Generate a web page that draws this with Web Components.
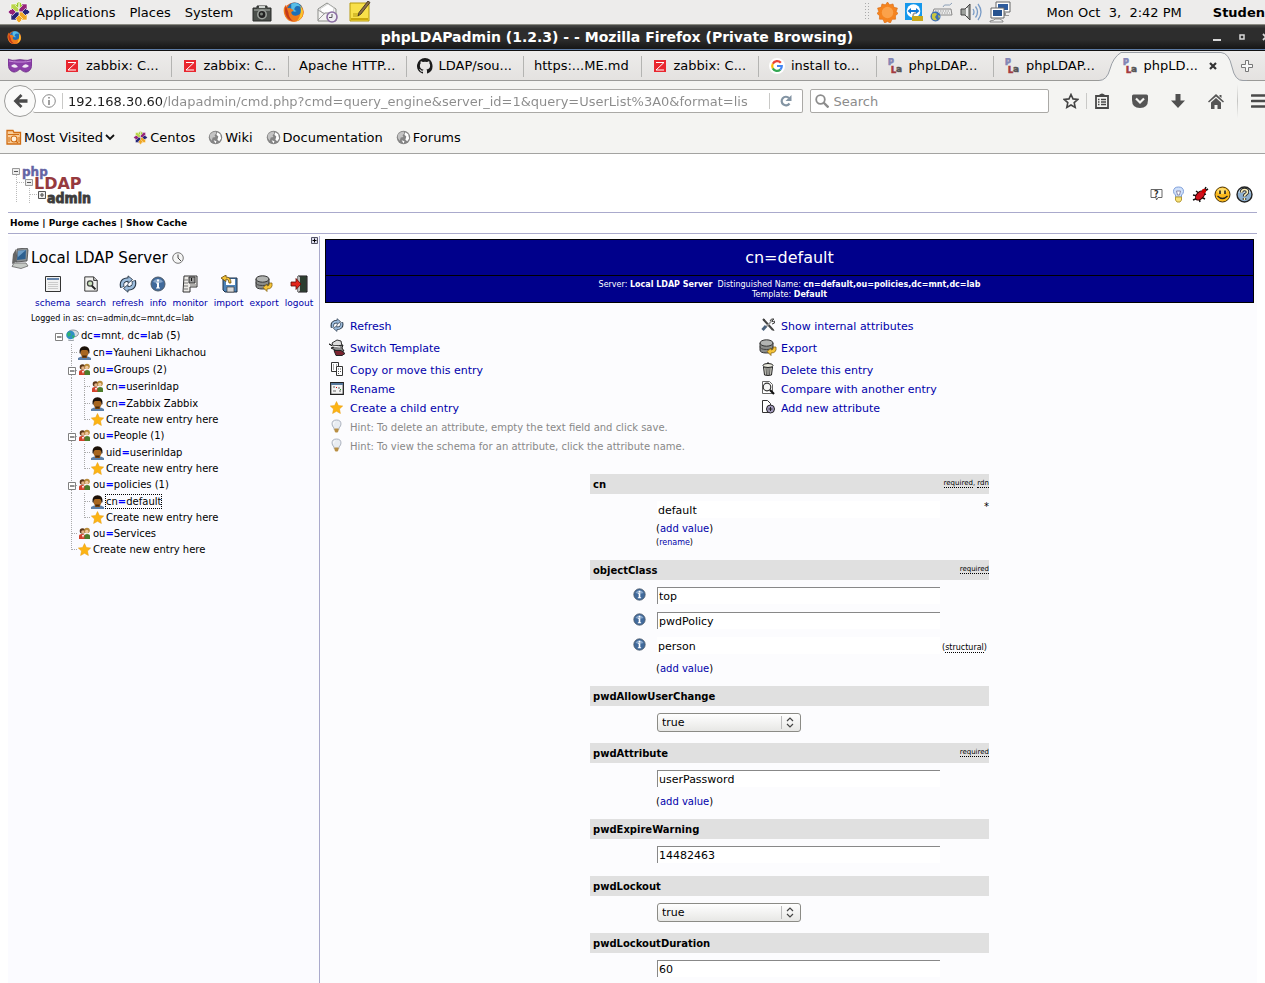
<!DOCTYPE html>
<html lang="en">
<head>
<meta charset="utf-8">
<title>phpLDAPadmin (1.2.3) -</title>
<style>
html,body{margin:0;min-height:100%;overflow-x:hidden}
body{font-family:"DejaVu Sans",sans-serif;font-size:13px;color:#000;background:#fff}
</style>
</head>
<body>
<desktop-screen></desktop-screen>

<script>
const define = (name, html, setup) => {
  const t = document.createElement('template');
  t.innerHTML = html;
  customElements.define(name, class extends HTMLElement {
    connectedCallback() {
      if (this.shadowRoot) return;
      const root = this.attachShadow({mode: 'open'});
      root.append(t.content.cloneNode(true));
      if (setup) setup(root, this);
    }
  });
};

/* Icon artwork: [width, height, svg content] */
const centos = '<g stroke="#fff" stroke-width=".6"><path d="M12 1l3.600 3.600v6.400h-3z" fill="#9ccd2a"/><path d="M12 1L8.400 4.600v6.400h3z" fill="#9ccd2a"/><path d="M12 23l3.600-3.600V13h-7v6.400z" fill="#efa724"/><path d="M1 12l3.600-3.600H11v7H4.600z" fill="#932279"/><path d="M23 12l-3.600-3.600H13v7h6.400z" fill="#262577"/><path d="M4 4h6l-1.500 1.500L12 9v3H9L5.500 8.500 4 10z" fill="#b9d54a"/><path d="M20 4v6l-1.500-1.500L15 12h-3V9l3.500-3.500L14 4z" fill="#932279"/><path d="M20 20h-6l1.500-1.500L12 15v-3h3l3.500 3.500L20 14z" fill="#efa724"/><path d="M4 20v-6l1.500 1.500L9 12h3v3l-3.500 3.500L10 20z" fill="#262577"/></g>';
const firefox = '<circle cx="12" cy="12" r="10.500" fill="#e8641b"/><circle cx="13" cy="10" r="8.500" fill="#1d6fb8"/><path d="M9 3q7-3 11 4-5-3-7 0t2 4q-4 2-6-2z" fill="#58bde6"/><path d="M3 4q0 3 1.500 4Q8 7 9.500 9q2 0 2 1.500L9 12q0 4 5 4 4 0 6.500-4.500Q22 8 20 5q4 6 1.500 11.500T12 22.500 2 16 3 4z" fill="#ee7a1c"/><path d="M19 5q4.500 6 2 11.500-2 4-6 5.500 6-6 4-17z" fill="#fbc62d"/><path d="M3 5q-2 7 1 12 2 4 7 5-5-4-5-9z" fill="#c43a1c"/>';
const globe = '<circle cx="8" cy="8" r="7.200" fill="#858585"/><path d="M2 5q2-3 6-3.500l1 2-2 2 1 2-3 .5-1 3.500-2-3z" fill="#c4c4c4"/><path d="M10 2.500l3 2 1 4.500-2 3-2-1.500 1-3.500-2-2zM6 11l3 1-1 2.500z" fill="#fff"/>';
const people = '<circle cx="4.500" cy="4" r="2.800" fill="#5a3518"/><circle cx="5" cy="5" r="1.800" fill="#e6b489"/><circle cx="9" cy="3.500" r="2.800" fill="#b98b3a"/><circle cx="8.800" cy="4.500" r="1.700" fill="#f0c8a0"/><path d="M1 12V9q0-2 3-2t3 2v3z" fill="#d2402a"/><path d="M6.500 12V8.500q0-1.500 2.500-1.500 3 0 3 2v3z" fill="#4d7d2b"/><path d="M4 8l1 3 1-3z" fill="#fff"/>';
const star = '<path d="M6.500.5l1.900 4 4.300.5-3.200 3 .9 4.500-3.900-2.200L2.600 12.500l.9-4.500L.3 5l4.300-.5z" fill="#fcb414" stroke="#e69a10" stroke-width=".5"/>';
const info = '<circle cx="8" cy="8" r="7" fill="#416a9c" stroke="#4c5a69"/><path d="M3 6a5.500 5 0 0 1 10 0q-5 2-10 0z" fill="#86a5c9"/><path d="M7 3.500h2v2H7zM6 6.500h3v5h1v1H6v-1h1v-4H6z" fill="#fff"/>';
const refresh = '<g fill="none" stroke="#2b3a4a" stroke-width="4"><path d="M3 11Q1 4 9 4M13 5q2 7-6 7"/></g><g fill="#9cbcdc" stroke="#2b3a4a" stroke-width=".8"><path d="M8 .8L12 4 8 7.500zM8 8.500L4 12l4 3.300z"/></g><g fill="none" stroke="#9cbcdc" stroke-width="2.200"><path d="M3 10.500Q1.500 4 9 4M13 5.500q1.500 6.500-6 6.500"/></g>';
const exportArt = '<path d="M1 4v7q0 3 6.500 3t6.500-3V4z" fill="#8a8c8a" stroke="#333"/><ellipse cx="7.500" cy="4" rx="6.500" ry="3.200" fill="#b2b4b2" stroke="#333"/><path d="M1 7.500q0 3 6.500 3t6.500-3" fill="none" stroke="#444"/><path d="M17 8q1 6-5 6v2.500L8 12.500 12 9v2q2.500 0 2.500-3z" fill="#f5c43a" stroke="#7c5a08" stroke-width=".7"/>';
const bulb = '<path d="M6.500 1q4.500 0 4.500 4 0 2-2 4v1.500H4V9Q2 7 2 5q0-4 4.500-4z" fill="#e8ecf2" stroke="#9aa2b0" stroke-width=".8"/><path d="M5 2.500q-1.500 1-1.500 3" stroke="#fff" fill="none"/><path d="M4.500 9.500h4V12l-1 1.500h-2l-1-1.500z" fill="#b98f43"/>';
const ICONS = {
  centos: [24,24,centos], firefox: [24,24,firefox], globe: [16,16,globe], people: [13,13,people], star: [13,13,star],
  info: [16,16,info], refresh: [16,16,refresh], export: [18,17,exportArt], bulb: [13,14,bulb],
  camera: [20,20,'<path d="M1 6h4V4h10v2h4v13H1z" fill="#4b4f4b" stroke="#2a2d2a"/><path d="M2 7h16v2H2z" fill="#7d827d"/><path d="M7 4h6v2H7z" fill="#cfd3cf"/><circle cx="10" cy="12.500" r="5" fill="#9ba09b"/><circle cx="10" cy="12.500" r="3.400" fill="#222"/><circle cx="9.500" cy="12" r="1.500" fill="#7b827b"/>'],
  mail: [22,22,'<path d="M2 8l9-6 9 6v12H2z" fill="#f4f4f2" stroke="#8b8d89"/><path d="M4 8l8-5 6 4-1 5H6z" fill="#fff" stroke="#bbb" stroke-width=".6"/><path d="M2 19l7-7h4l7 7M2 9l7 4" fill="none" stroke="#999"/><circle cx="16" cy="16" r="5" fill="#efedf2" stroke="#8b6ea3" stroke-width="1.600"/><path d="M16 13v3.500h-3" fill="none" stroke="#555"/>'],
  note: [22,22,'<path d="M1 2h19v18H1z" fill="#f8e04a" stroke="#b69a0c"/><path d="M2 17h17v2H2z" fill="#cba90d"/><path d="M4 13h7M4 15h5" stroke="#b69a0c"/><path d="M19 0l2 1.500L12 13l-3 2 1-3.500z" fill="#8b6d4a" stroke="#33281a" stroke-width=".8"/>'],
  grip: [5,18,'<g fill="#aaa"><path d="M0 0h1v1H0zM3 0h1v1H3zM0 3h1v1H0zM3 3h1v1H3zM0 6h1v1H0zM3 6h1v1H3zM0 9h1v1H0zM3 9h1v1H3zM0 12h1v1H0zM3 12h1v1H3zM0 15h1v1H0zM3 15h1v1H3z"/></g>'],
  sun: [22,22,'<path d="M11 0l2.200 3 3.600-1 .9 3.600 3.700.8-1.200 3.600L22 12l-2.700 2.300.2 3.700-3.700.2L14 22l-3-1.500L8 22l-1.800-3.800-3.700-.2.200-3.700L0 12l1.800-2L.6 6.400l3.700-.8L5.200 2l3.600 1z" fill="#f5841f" stroke="#d9660b" stroke-width=".6"/><circle cx="11" cy="11" r="6" fill="#fba24a"/>'],
  viewer: [18,20,'<path d="M0 1h17v17H0z" fill="#1598ec"/><circle cx="8.500" cy="9" r="6.800" fill="#fff"/><path d="M2.500 9l3.500-3v2h5V6l3.500 3-3.500 3v-2H6v2z" fill="#1179d6"/><path d="M7 14h11v5H7z" fill="#c9a91c"/><path d="M8 14q0-3 3-3" fill="none" stroke="#999" stroke-width="1.500"/>'],
  keyboard: [23,20,'<path d="M13 5q1-3 4-2t5-2" fill="none" stroke="#8ca0b8"/><path d="M4 7h17l1 6H2z" fill="#eee" stroke="#888"/><path d="M5 9h15M4 11h16" stroke="#999" stroke-dasharray="1.500 1"/><circle cx="5.500" cy="14.500" r="5" fill="#3d6fb5"/><path d="M2 12q3-2 5 0l-2 3 2 3q-4 1-5-2zM8 13l2 1-1 3z" fill="#c8c640"/>'],
  sound: [22,20,'<path d="M1 7h4l5-5v16l-5-5H1z" fill="#9da09c" stroke="#444"/><path d="M7 6v8" stroke="#eee" stroke-width="2"/><path d="M13 7q2 3 0 6M15.500 4.500q4 5.500 0 11M18 2q6 8 0 16" fill="none" stroke="#7a9cc6" stroke-width="1.300"/>'],
  network: [22,22,'<path d="M7 1h14v10H7z" fill="#fff" stroke="#666"/><path d="M9 3h10v6H9z" fill="#2e5c9e"/><path d="M12 12h5v2h3v1H12z" fill="#999"/><path d="M2 7h13v10H2z" fill="#fff" stroke="#666"/><path d="M4 9h9v6H4z" fill="#26528f"/><path d="M6 18h5l3 2v1H1v-1l4-1z" fill="#eee" stroke="#777" stroke-width=".8"/>'],
  mask: [24,16,'<path d="M0 1q5 2 8 1 4-1 8 0 3 1 8-1 1 9-3 12-4 3-9-2-5 5-9 2Q-1 10 0 1z" fill="#8b3fa8" stroke="#5f2379" stroke-width=".6"/><path d="M1 3q5 1 8 1t6 0 8-1" stroke="#c58bd9" fill="none"/><path d="M3 8q4-4 7 1-4 2-7-1zM21 8q-4-4-7 1 4 2 7-1z" fill="#f1e8f5"/>'],
  zabbix: [12,12,'<path d="M0 0h12v12H0z" fill="#e9262e"/><path d="M2 2.500h8L2 10h8" fill="none" stroke="#fff"/>'],
  github: [16,16,'<path d="M8 0a8 8 0 0 0-2.500 15.600c.4.100.5-.2.500-.4v-1.500c-2.200.5-2.700-1-2.700-1-.4-.9-.9-1.200-.9-1.200-.7-.5.100-.5.100-.5.800.100 1.200.8 1.200.8.700 1.200 1.900.9 2.300.7.100-.5.300-.9.500-1.100-1.800-.2-3.600-.9-3.600-4 0-.9.300-1.600.8-2.100-.1-.2-.4-1 .1-2.100 0 0 .7-.2 2.200.8a7.500 7.500 0 0 1 4 0c1.500-1 2.200-.8 2.200-.8.400 1.100.2 1.900.100 2.100.5.600.8 1.300.8 2.100 0 3.100-1.900 3.700-3.700 3.900.3.300.6.800.6 1.500v2.200c0 .2.100.5.500.4A8 8 0 0 0 8 0z" fill="#1b1b1b"/>'],
  google: [16,16,'<circle cx="8" cy="8" r="8" fill="#fff"/><g fill="none" stroke-width="2.200"><path d="M11.800 4.800A4.800 4.800 0 0 0 3.800 5.800" stroke="#ea4335"/><path d="M3.800 5.800a4.800 4.800 0 0 0 0 4.600" stroke="#fbbc05"/><path d="M3.800 10.400a4.800 4.800 0 0 0 7.500 1.200" stroke="#34a853"/><path d="M11.300 11.600A4.800 4.800 0 0 0 12.800 8H8" stroke="#4285f4"/></g>'],
  pla: [16,16,'<g font-family="DejaVu Sans" font-weight="bold"><text x="1" y="7" font-size="8" fill="#8286b4" stroke="#8286b4" stroke-width=".7">P</text><text x="4" y="15" font-size="8" fill="#a23c40" stroke="#a23c40" stroke-width=".7">L</text><text x="9" y="14" font-size="9" fill="#555" stroke="#555" stroke-width=".5">a</text></g>'],
  close: [8,8,'<path d="M1 1l6 6M7 1L1 7" stroke="#333" stroke-width="2.200"/>'],
  plus: [12,12,'<path d="M4.500.5h3v4h4v3h-4v4h-3v-4h-4v-3h4z" fill="#f8f8f8" stroke="#777"/>'],
  back: [16,16,'<path d="M8.500 1L1.500 8l7 7 2-2L7 9.800h8.500V6.200H7L10.500 3z" fill="#4a4a4a"/>'],
  ident: [14,14,'<circle cx="7" cy="7" r="6.300" fill="none" stroke="#888"/><path d="M6.300 3h1.400v1.500H6.300zM6.300 6h1.400v5H6.300z" fill="#777"/>'],
  reload: [14,14,'<path d="M10.500 9.500a4.300 4.300 0 1 1-.5-5.500" fill="none" stroke="#8394a3" stroke-width="2.200"/><path d="M12.500 1v6h-6z" fill="#8394a3"/>'],
  lens: [14,14,'<circle cx="5.500" cy="5.500" r="4.300" fill="none" stroke="#8c8c8c" stroke-width="1.800"/><path d="M8.500 8.500l5 5" stroke="#8c8c8c" stroke-width="2.400"/>'],
  bookmark: [16,16,'<path d="M8 1.500l2 4.400 4.800.5-3.600 3.200 1 4.800L8 12l-4.200 2.400 1-4.800L1.200 6.400 6 5.900z" fill="none" stroke="#444" stroke-width="1.600"/>'],
  clip: [14,16,'<path d="M1 3h12v12H1z" fill="none" stroke="#484848" stroke-width="1.800"/><path d="M4 4V2q3-3 6 0v2z" fill="#484848"/><path d="M3 6.500h1.500M6 6.500h5M3 9h1.500M6 9h5M3 11.500h1.500M6 11.500h5" stroke="#484848" stroke-width="1.300"/>'],
  pocket: [16,14,'<path d="M0 2q0-1.500 1.500-1.500h13Q16 .5 16 2v4q0 8-8 8T0 6z" fill="#555"/><path d="M4 4.500l4 4 4-4" fill="none" stroke="#f4f4f2" stroke-width="2.200"/>'],
  download: [14,14,'<path d="M4.500 0h5v6.500H14L7 14 0 6.500h4.500z" fill="#505050"/>'],
  home: [16,15,'<path d="M8 0l8 7.500-1 1L8 2.500l-7 6-1-1zM11.500 1h2v3l-2-1.500z" fill="#555"/><path d="M3 8.500l5-4.500 5 4.500V15H9.500v-4h-3v4H3z" fill="#555"/>'],
  menu: [18,14,'<path d="M1 1.500h18M1 7h18M1 12.500h18" stroke="#4a4a4a" stroke-width="2.600" stroke-linecap="round"/>'],
  folder: [16,16,'<path d="M1 1.500h6l1 2h6.500V15H1z" fill="#f9cf9c" stroke="#d16d13" stroke-width="1.300"/><path d="M2 5.500h11M3 8v5M13 8v5" stroke="#d16d13"/><circle cx="8" cy="10" r="3" fill="#fff0dc" stroke="#d16d13" stroke-width="1.200"/><path d="M10 12l2 2" stroke="#d16d13" stroke-width="1.500"/>'],
  chevron: [10,7,'<path d="M1 1l4 4 4-4" fill="none" stroke="#111" stroke-width="1.800"/>'],
  wmin: [10,12,'<path d="M1 8h8v2H1z" fill="#d8d8d8"/>'],
  wmax: [8,12,'<path d="M2 4h4v4H2z" fill="none" stroke="#d8d8d8" stroke-width="1.500"/>'],
  wclose: [8,12,'<path d="M1 3l6 6M7 3L1 9" stroke="#d8d8d8" stroke-width="1.800"/>'],
  logo: [84,42,'<g stroke="#bbb" stroke-dasharray="1 1" fill="none"><path d="M5.500 11v28M18.500 24v15M6 18.500h8M19 30.500h10"/></g><g fill="#eee" stroke="#999"><path d="M1.500 4.500h7v6h-7zM14.500 15.500h7v6h-7z"/><path d="M27.500 27.500h7v7h-7z" stroke="#555"/></g><path d="M3 7.500h4M16 18.500h4M29 31h4M31 29v4" stroke="#555" stroke-width="1.200"/><g font-family="DejaVu Sans" font-weight="bold"><text x="11" y="12" font-size="12" fill="#6464a4" stroke="#6464a4" stroke-width=".4">php</text><text x="23" y="25" font-size="16" fill="#963a3e">LDAP</text><text x="36" y="39" font-size="14" fill="#3c3c3c" stroke="#3c3c3c" stroke-width=".8" font-family="DejaVu Sans Condensed, DejaVu Sans" font-stretch="condensed">admin</text></g>'],
  ask: [13,13,'<path d="M1 1.500h11v8H8L6.500 12 6 9.500H1z" fill="#fff" stroke="#666"/><text x="4" y="8.500" font-size="8" font-weight="bold" font-family="DejaVu Sans" fill="#333">?</text>'],
  idea: [13,17,'<path d="M6.500 1q5 0 5 4.500 0 2-2 3.500v2h-6V9q-2-1.500-2-3.500Q1.500 1 6.500 1z" fill="#cfe0fa" stroke="#7f9fda"/><path d="M4.500 5h4l-1 4h-2z" fill="#fff" stroke="#88a"/><path d="M3.500 11h6v3l-1.500 2H5l-1.500-2z" fill="#f7e27a" stroke="#b79b35"/>'],
  bug: [17,17,'<path d="M14 1l-2 4M16 3l-5 3M1 9l5 1M1 14l5-2M4 5l4 3M14 8l-4 1M13 13l-4-2M8 16l-1-4" stroke="#111" stroke-width="1.500"/><ellipse cx="8" cy="9.500" rx="5.500" ry="3.400" transform="rotate(-45 8 9.500)" fill="#d1101c" stroke="#300"/><circle cx="12" cy="5" r="2.200" fill="#c00"/>'],
  smile: [17,17,'<circle cx="8.500" cy="8.500" r="7.500" fill="#fbb91c" stroke="#4a3305"/><ellipse cx="8" cy="5" rx="5" ry="3" fill="#fddb6a"/><path d="M6 4.500v3.500M11 4.500v3.500" stroke="#222" stroke-width="1.600"/><path d="M3.500 10q5 5 10 0" fill="none" stroke="#222" stroke-width="1.300"/>'],
  help: [17,17,'<circle cx="8.500" cy="8.500" r="7.500" fill="#8fb0cf" stroke="#222" stroke-width="1.400"/><path d="M2.500 7a6 5 0 0 1 12 0z" fill="#c6d9ea"/><path d="M5.500 6.500q0-3 3-3t3 2.500q0 1.500-2 2.500-1 .7-1 2M8.500 12v2" fill="none" stroke="#222" stroke-width="3.400"/><path d="M5.500 6.500q0-3 3-3t3 2.500q0 1.500-2 2.500-1 .7-1 2M8.500 12v2" fill="none" stroke="#fff3bd" stroke-width="1.600"/>'],
  max: [7,7,'<path d="M.5.5h6v6h-6z" fill="#dde" stroke="#556"/><path d="M1.500 3.500h4M3.500 1.500v4" stroke="#000"/>'],
  server: [18,21,'<path d="M6 1l10-1 1 2-1 11-11 1z" fill="#8b9094" stroke="#444" stroke-width=".8"/><path d="M7 3l8-1-.5 9-8.500 1z" fill="#2c5f90"/><path d="M7 3l8-1-8 7z" fill="#6c9cc6"/><path d="M3 15h12l2 3-7 2.500-9-2z" fill="#c6cac6" stroke="#666" stroke-width=".8"/><path d="M2 6l3-5v13l-4 2z" fill="#666"/>'],
  clock: [12,12,'<circle cx="6" cy="6" r="5.300" fill="#f5f5f5" stroke="#777"/><path d="M6 2.500V6l3 3" fill="none" stroke="#444"/>'],
  schema: [18,18,'<path d="M1.500 1.500h15v15h-15z" fill="#f2f2f2" stroke="#333"/><path d="M3 3h12v2H3z" fill="#6484ac"/><path d="M4 7.500h10M4 9.500h10M4 11.500h10M4 13.500h10" stroke="#ccc"/>'],
  search: [18,18,'<path d="M2 1h10l4 4v12H2z" fill="#f2f2f0" stroke="#222"/><path d="M12 1v4h4" fill="#ccc" stroke="#222"/><circle cx="8" cy="8.500" r="3" fill="#cbe3bd" stroke="#444" stroke-width="1.400"/><path d="M10 11l4 4" stroke="#222" stroke-width="2.200"/>'],
  monitor: [18,18,'<path d="M3 1h13v11H9v5H2z" fill="#eceae6" stroke="#333"/><path d="M8 2h6v6H8z" fill="#999" stroke="#333"/><path d="M10 3h1v3h-1z" fill="#111"/><path d="M3 5h4M3 8h4M3 11h4M3 14h4M9 10h6" stroke="#777"/>'],
  import: [18,18,'<path d="M3 3h14v14H5l-2-2z" fill="#4d83b8" stroke="#1c2f44"/><path d="M6 4h9v6H6z" fill="#fff"/><path d="M7 12h7v5H7z" fill="#d8d8d8" stroke="#444" stroke-width=".7"/><path d="M9 8q0-4-3-4V6.500L1 3l5-3v2q5 0 5 6z" fill="#f5c43a" stroke="#6a4a05" stroke-width=".8"/>'],
  logout: [18,18,'<path d="M8 1h9v16H8z" fill="#555" stroke="#111"/><path d="M10 2l6-1v16l-6-1z" fill="#2c3e30"/><path d="M8 1l2 1v14l-2 1z" fill="#bbb"/><path d="M1 7h5V3.500L11 9l-5 5.500V11H1z" fill="#e3241b" stroke="#5c0804" stroke-width=".8"/>'],
  world: [14,13,'<ellipse cx="8" cy="4.500" rx="5.500" ry="3.500" fill="#d8dde2" stroke="#8a949c"/><circle cx="5.500" cy="6" r="4.300" fill="#2f8fc4"/><path d="M2 4l3-1 1 3-3 2zM7 6l3 1-2 3z" fill="#2fb36a"/><path d="M3 11q4 1 6 0" stroke="#a8b0b8"/>'],
  person: [13,14,'<path d="M0 14v-2q3-2 6.500-2t6.500 2v2z" fill="#5c7fa8"/><path d="M4 10h5v2H4z" fill="#8b5217"/><ellipse cx="6.500" cy="6.500" rx="4" ry="5" fill="#a8661f"/><path d="M1.500 7Q1 .3 6.500.3T11.500 7l-1 1q0-4-2-4h-4q-2 0-2 4z" fill="#1b1008"/><path d="M4 9.500h5l-1 2H5z" fill="#4a2a0c"/>'],
  hat: [18,17,'<path d="M4 4l5-3 4 1 1 5-8 2z" fill="#ddd" stroke="#333"/><path d="M1 5q5 3 14 1l-1 3 2 3q-6 2-9-1L3 9l3-1z" fill="#888" stroke="#222"/><path d="M6 11.500h7l4 3-3 2H8z" fill="#7a2430" stroke="#222"/><path d="M4 7l8 1" stroke="#fff"/>'],
  copy: [14,14,'<path d="M1.500.5h7v9h-7z" fill="#fff" stroke="#333"/><path d="M3 3h1M6 3h1M3 5h1M3 7h1" stroke="#555"/><path d="M6.500 4.500h6v9h-6z" fill="#fff" stroke="#333"/><path d="M8 7h1M10 7h1M8 9.500h1M10 9.500h1M8 11.500h1" stroke="#555"/>'],
  rename: [14,13,'<path d="M.7.7h12.600v11.600H.7z" fill="#f4f4f4" stroke="#222" stroke-width="1.300"/><path d="M1 1h12v2H1z" fill="#56789c"/><path d="M3 5h2M8 6h2M3 9h3M9 9h2" stroke="#666" stroke-width="1.200"/><path d="M6 5h1v1H6z" fill="#c00"/><path d="M10 7h1v1h-1z" fill="#2a2"/>'],
  tools: [14,14,'<path d="M2 1l10 11M2 2l2 0" stroke="#444" stroke-width="2"/><path d="M12 1.500L5 9" stroke="#999" stroke-width="1.600"/><path d="M5 8l-3.500 4" stroke="#49617c" stroke-width="3"/><path d="M9 3q1-3 4-2l-2 2 1 1 2-1q0 3-3 3M12 11l1 2" fill="none" stroke="#444"/>'],
  trash: [12,14,'<path d="M1.500 5h9l-1 8q-3.500 1-7 0z" fill="#cfcfc4" stroke="#222"/><path d="M4 6l.5 7M6 6v7M8 6l-.5 7" stroke="#555"/><ellipse cx="6" cy="3.500" rx="5" ry="2" fill="#e8e8dc" stroke="#222"/><path d="M5 1h2" stroke="#222"/>'],
  compare: [14,14,'<path d="M1.500.5h7l3 3v9h-10z" fill="#fff" stroke="#666"/><circle cx="6" cy="6" r="3.800" fill="#f5f5f5" stroke="#333" stroke-width="1.200"/><path d="M9 9l4 4" stroke="#111" stroke-width="2.200"/>'],
  add: [14,14,'<path d="M1.500.5h5l3 3v9h-8z" fill="#fff" stroke="#333"/><circle cx="9.500" cy="9" r="4" fill="#a59cc0" stroke="#222"/><path d="M7.500 9h4M9.500 7v4" stroke="#222"/>'],
  updown: [8,11,'<path d="M1 4l3-3 3 3M1 7l3 3 3-3" fill="none" stroke="#444" stroke-width="1.200"/>'],
  /* tree guides */
  none: [13,17,''],
  bar: [13,17,'<path d="M6.500 0v17" stroke="#aaa" stroke-dasharray="1 1"/>'],
  tee: [13,17,'<path d="M6.500 0v17M7 8.500h6" stroke="#aaa" stroke-dasharray="1 1"/>'],
  end: [13,17,'<path d="M6.500 0v9M7 8.500h6" stroke="#aaa" stroke-dasharray="1 1" fill="none"/>'],
  open: [13,17,'<path d="M6.500 0v17M7 9.500h6" stroke="#aaa" stroke-dasharray="1 1"/><path d="M3.500 6.500h7v7h-7z" fill="#fff" stroke="#808080"/><path d="M5 10h4.500" stroke="#222"/>'],
  root: [13,17,'<path d="M3.500 6.500h7v7h-7z" fill="#fff" stroke="#808080"/><path d="M5 10h4.500" stroke="#222"/>']
};
customElements.define('x-icon', class extends HTMLElement {
  connectedCallback() {
    if (this.shadowRoot) return;
    const [w, h, art] = ICONS[this.getAttribute('name')];
    const W = +this.getAttribute('w') || w, H = Math.round(h * W / w);
    this.attachShadow({mode: 'open'}).innerHTML =
      `<style>:host{display:inline-block;flex:none;width:${W}px;height:${H}px;white-space:normal}svg{display:block}</style><svg width="${W}" height="${H}" viewBox="0 0 ${w} ${h}" aria-hidden="true">${art}</svg>`;
  }
});

const BTN = 'button{all:unset;display:flex;align-items:center;cursor:default}';

define('gnome-panel', `<style>
:host{display:flex;align-items:center;height:24px;background:#edeceb;border-bottom:1px solid #8a8a82;padding-left:7px;white-space:nowrap;overflow:hidden}
${BTN}
.apps{gap:5px}.menus{display:flex;gap:14px;flex:none}.launch{display:flex;gap:11px;margin-left:19px;align-items:center}
.tray{display:flex;align-items:center;gap:7px;margin-left:auto}
time{margin-left:35px;white-space:pre}b{margin-left:31px;flex:none}
</style>
<nav class="menus"><button class="apps"><x-icon name="centos"></x-icon>Applications</button><button>Places</button><button>System</button></nav>
<div class="launch"><x-icon name="camera"></x-icon><x-icon name="firefox" w="22"></x-icon><x-icon name="mail"></x-icon><x-icon name="note"></x-icon></div>
<div class="tray"><x-icon name="grip"></x-icon><x-icon name="sun" w="21"></x-icon><x-icon name="viewer"></x-icon><x-icon name="keyboard"></x-icon><x-icon name="sound"></x-icon><x-icon name="network"></x-icon></div>
<time>Mon Oct  3,  2:42 PM</time><b>Studen</b>`);

define('window-title', `<style>
:host{display:flex;align-items:center;height:24px;background:linear-gradient(#4a4a48,#2d2d2d 15%,#2d2d2d 60%,#161616);border-bottom:1px solid #5c7ba5;box-shadow:0 1px #111;margin-bottom:1px;color:#fff;overflow:hidden}
x-icon[name=firefox]{margin-left:7px}
h1{flex:1;margin:0;font-size:14px;font-weight:bold;text-align:center;white-space:nowrap}
.win{display:flex;gap:16px;margin-right:-5px}${BTN}
</style>
<x-icon name="firefox" w="15"></x-icon><h1>phpLDAPadmin (1.2.3) - - Mozilla Firefox (Private Browsing)</h1>
<div class="win"><button aria-label="Minimize"><x-icon name="wmin"></x-icon></button><button aria-label="Maximize"><x-icon name="wmax"></x-icon></button><button aria-label="Close"><x-icon name="wclose"></x-icon></button></div>`);

define('browser-tab', `<style>
:host{flex:117 1 0;min-width:0;display:flex;align-items:center;position:relative}
button{all:unset;display:flex;align-items:center;gap:6px;padding-left:12px;white-space:nowrap;flex:1;min-width:0}
:host([plain]) button{padding-left:10px}
:host(:not([last]):not([active]))::after{content:"";position:absolute;right:0;top:5px;height:21px;width:1px;background:#b4b4b2}
.edge{display:none}
:host([active]) .edge{display:block;position:absolute;left:-13px;top:0;width:148px;height:30px}
:host([active]) button{position:relative}
.x{display:none}:host([active]) .x{display:flex;flex:none;padding:0;position:relative;margin-right:12px}
</style><svg class="edge" viewBox="0 0 148 30" preserveAspectRatio="none"><path d="M0 29.500Q8 29.500 11 18T22 1.500H122Q130 2 133 16t11 13.500H148V30H0z" fill="#f4f4f2"/><path d="M0 29.500Q8 29.500 11 18T22 1.500H122Q130 2 133 16t11 13.500H148" fill="none" stroke="#9a9fa6"/></svg>
<button role="tab"><slot name="icon"></slot><span><slot></slot></span></button><button class="x" aria-label="Close tab"><x-icon name="close"></x-icon></button>`);

define('tab-strip', `<style>
:host{display:flex;align-items:stretch;height:29px;background:linear-gradient(#edeceb,#e4e2e0);border-bottom:1px solid #9a9a98}
.mask{width:54px;box-sizing:border-box;padding-left:8px;display:flex;align-items:center;flex:none}
${BTN}.new{width:36px;flex:none;position:relative;padding-left:12px;box-sizing:border-box}
x-icon[name=zabbix]{padding-right:2px}
</style><span class="mask"><x-icon name="mask"></x-icon></span>
<browser-tab><x-icon slot="icon" name="zabbix"></x-icon>zabbix: C...</browser-tab>
<browser-tab><x-icon slot="icon" name="zabbix"></x-icon>zabbix: C...</browser-tab>
<browser-tab plain>Apache HTTP...</browser-tab>
<browser-tab plain><x-icon slot="icon" name="github"></x-icon>LDAP/sou...</browser-tab>
<browser-tab plain>https:...ME.md</browser-tab>
<browser-tab><x-icon slot="icon" name="zabbix"></x-icon>zabbix: C...</browser-tab>
<browser-tab plain><x-icon slot="icon" name="google"></x-icon>install to...</browser-tab>
<browser-tab plain><x-icon slot="icon" name="pla"></x-icon>phpLDAP...</browser-tab>
<browser-tab last plain><x-icon slot="icon" name="pla"></x-icon>phpLDAP...</browser-tab>
<browser-tab active plain><x-icon slot="icon" name="pla"></x-icon>phpLD...</browser-tab>
<button class="new" aria-label="New tab"><x-icon name="plus"></x-icon></button>`);

define('nav-bar', `<style>
:host{display:flex;align-items:center;height:40px;background:#f4f4f2;padding-left:4px;overflow:hidden}
${BTN}
.back{width:30px;height:30px;border:1px solid #9c9c9a;border-radius:50%;background:#fafaf9;justify-content:center;flex:none;position:relative}
.url{flex:758;display:flex;align-items:center;height:22px;border:1px solid #aaa9a6;border-left:0;background:#fff;border-radius:2px;margin-left:-3px;padding-left:9px;min-width:0}
input{border:0;outline:0;padding:0;margin:0;font:13px "DejaVu Sans",sans-serif;background:none;flex:1;min-width:0;height:20px}
.sep{width:1px;height:16px;background:#c9c9c7;flex:none}
.url .sep:first-of-type{margin:0 5px 0 6px}
#addr{color:transparent;background:linear-gradient(90deg,#1c1c1c 95px,#8b8b8b 95px);-webkit-background-clip:text;background-clip:text;margin-right:18px}
.reload{padding:0 9px}
.search{flex:233;display:flex;align-items:center;gap:5px;height:22px;border:1px solid #aaa9a6;background:#fff;border-radius:2px;margin-left:7px;padding-left:4px;min-width:0}
#q::placeholder{color:#8b8b8b;opacity:1}
.tools{display:flex;align-items:center;flex:none;margin-left:14px}
.tools .sep{margin:0 8px 0 7px}.tools button+button{margin-left:23px}
.tools .tall{height:34px;margin:0 13px 0 13px;background:linear-gradient(#f4f4f2,#c4c4c2,#f4f4f2)}
.menu{width:14px}
</style>
<button class="back" aria-label="Back"><x-icon name="back"></x-icon></button>
<div class="url"><x-icon name="ident"></x-icon><span class="sep"></span><input id="addr" aria-label="Address" value="192.168.30.60/ldapadmin/cmd.php?cmd=query_engine&amp;server_id=1&amp;query=UserList%3A0&amp;format=lis"><span class="sep"></span><button class="reload" aria-label="Reload"><x-icon name="reload"></x-icon></button></div>
<div class="search"><x-icon name="lens"></x-icon><input id="q" aria-label="Search" placeholder="Search"></div>
<div class="tools"><button aria-label="Bookmark"><x-icon name="bookmark"></x-icon></button><span class="sep"></span><button aria-label="Bookmarks list"><x-icon name="clip"></x-icon></button><button aria-label="Pocket"><x-icon name="pocket"></x-icon></button><button aria-label="Downloads"><x-icon name="download"></x-icon></button><button aria-label="Home"><x-icon name="home"></x-icon></button><span class="sep tall"></span><button class="menu" aria-label="Menu"><x-icon name="menu"></x-icon></button></div>`);

define('bookmarks-bar', `<style>
:host{display:flex;align-items:center;gap:13px;height:32px;background:#f4f4f2;border-bottom:1px solid #a3a3a1;padding-left:6px}
a,button{all:unset;display:flex;align-items:center;gap:2px}button{margin-right:5px}
</style>
<button><x-icon name="folder"></x-icon>Most Visited<x-icon name="chevron"></x-icon></button>
<a href="#centos"><x-icon name="centos" w="15"></x-icon>Centos</a><a href="#wiki"><x-icon name="globe" w="15"></x-icon>Wiki</a><a href="#docs"><x-icon name="globe" w="15"></x-icon>Documentation</a><a href="#forums"><x-icon name="globe" w="15"></x-icon>Forums</a>`);

define('pla-header', `<style>
:host{display:block}
.top{display:flex;justify-content:space-between;align-items:flex-end;height:50px;padding:0 4px 0 3px;border-bottom:1px solid #aaaacc}
.top x-icon[name=logo]{align-self:flex-start;margin-top:2px}
.icons{display:flex;gap:5px;align-items:center;padding-bottom:9px}.icons a{display:flex;justify-content:center;width:17px}
nav{font-size:9px;font-weight:bold;height:20px;line-height:20px;border-bottom:1px solid #aaaacc;padding-left:2px}
nav a{color:#000;text-decoration:none}
</style>
<div class="top"><x-icon name="logo"></x-icon><div class="icons"><a href="#forum" aria-label="Forum"><x-icon name="ask"></x-icon></a><a href="#feature" aria-label="Request feature"><x-icon name="idea"></x-icon></a><a href="#bug" aria-label="Report a bug"><x-icon name="bug"></x-icon></a><a href="#donate" aria-label="Donate"><x-icon name="smile"></x-icon></a><a href="#help" aria-label="Help"><x-icon name="help"></x-icon></a></div></div>
<nav><a href="#home">Home</a> | <a href="#purge">Purge caches</a> | <a href="#cache">Show Cache</a></nav>`);

define('tool-link', `<style>
:host{display:block}a{display:flex;flex-direction:column;align-items:center;gap:4px;color:#0000aa;text-decoration:none;font-size:9px;line-height:12px}
.i{height:19px;display:flex;align-items:center}
</style><a href="#tool"><span class="i"></span><slot></slot></a>`, (root, el) => {
  const i = document.createElement('x-icon');
  i.setAttribute('name', el.getAttribute('icon'));
  i.setAttribute('w', el.getAttribute('w') || 18);
  root.querySelector('.i').append(i);
});

/* One line of the directory tree; "guides" lists the cells left of the icon. */
define('tree-row', `<style>
:host{display:flex;align-items:center;height:17px;font-size:10px;white-space:pre;overflow:hidden}
:host([icon=star]){height:15px}
a{color:#000;text-decoration:none;margin-left:2px;line-height:13px}
:host([selected]) a{outline:1px dotted #000}
.g{display:flex;align-items:center}
i{font-style:normal;font-weight:bold;color:#0000ff}em{font-style:normal;color:#ff0000}
</style><span class="g"></span><a href="#entry"></a>`, (root, el) => {
  const g = root.querySelector('.g');
  for (const n of (el.getAttribute('guides') + ' ' + el.getAttribute('icon')).split(' ')) {
    const i = document.createElement('x-icon');
    i.setAttribute('name', n);
    g.append(i);
  }
  root.querySelector('a').innerHTML = el.getAttribute('text').replace(/,/g, '<em>,</em>').replace(/=/g, '<i>=</i>');
});

define('server-tree', `<style>
:host{display:block;box-sizing:border-box;background:#fbfbff;border-right:1px solid #aaaacc}
.max{display:flex;justify-content:flex-end;align-items:flex-end;height:8px;padding-right:1px}
h2{display:flex;align-items:center;gap:4px;margin:4px 0 0 3px;font-size:15px;font-weight:normal;height:20px}
h2 span{margin-left:-2px}
.tools{display:flex;gap:6px;padding:6px 0 0 27px}
p{margin:3px 0 2px 23px;font-size:8px;line-height:13px}
.tree{padding-left:44px}
</style>
<div class="max"><x-icon name="max"></x-icon></div>
<h2><x-icon name="server"></x-icon><span>Local LDAP Server</span><x-icon name="clock"></x-icon></h2>
<div class="tools"><tool-link icon="schema">schema</tool-link><tool-link icon="search" w="16">search</tool-link><tool-link icon="refresh">refresh</tool-link><tool-link icon="info" w="16">info</tool-link><tool-link icon="monitor">monitor</tool-link><tool-link icon="import">import</tool-link><tool-link icon="export">export</tool-link><tool-link icon="logout">logout</tool-link></div>
<p>Logged in as: cn=admin,dc=mnt,dc=lab</p>
<div class="tree">
<tree-row guides="root" icon="world" text="dc=mnt, dc=lab (5)"></tree-row>
<tree-row guides="none tee" icon="person" text="cn=Yauheni Likhachou"></tree-row>
<tree-row guides="none open" icon="people" text="ou=Groups (2)"></tree-row>
<tree-row guides="none bar tee" icon="people" text="cn=userinldap"></tree-row>
<tree-row guides="none bar tee" icon="person" text="cn=Zabbix Zabbix"></tree-row>
<tree-row guides="none bar end" icon="star" text="Create new entry here"></tree-row>
<tree-row guides="none open" icon="people" text="ou=People (1)"></tree-row>
<tree-row guides="none bar tee" icon="person" text="uid=userinldap"></tree-row>
<tree-row guides="none bar end" icon="star" text="Create new entry here"></tree-row>
<tree-row guides="none open" icon="people" text="ou=policies (1)"></tree-row>
<tree-row guides="none bar tee" icon="person" selected text="cn=default"></tree-row>
<tree-row guides="none bar end" icon="star" text="Create new entry here"></tree-row>
<tree-row guides="none tee" icon="people" text="ou=Services"></tree-row>
<tree-row guides="none end" icon="star" text="Create new entry here"></tree-row>
</div>`);

define('entry-action', `<style>
:host{display:flex;align-items:center;height:19px;font-size:11px}
:host([big]){height:25px}:host([first]){height:20px}
.i{box-sizing:border-box;width:25px;display:flex;justify-content:center;flex:none;padding:0 2px 3px 0}
a{color:#0000aa;text-decoration:none}
:host([hint]){font-size:10px;color:#888}
</style><span class="i"></span>`, (root, el) => {
  const i = document.createElement('x-icon');
  i.setAttribute('name', el.getAttribute('icon'));
  if (el.hasAttribute('w')) i.setAttribute('w', el.getAttribute('w'));
  root.querySelector('.i').append(i);
  const t = document.createElement(el.hasAttribute('hint') ? 'span' : 'a');
  if (t.localName === 'a') t.href = '#action';
  t.append(document.createElement('slot'));
  root.append(t);
});

define('attr-block', `<style>
:host{display:block}
.head{display:flex;justify-content:space-between;align-items:center;height:20px;background:#e0e0e0;padding-left:3px}
h3{margin:0;font-size:10px}h3 a{color:#000;text-decoration:none}
small{font-size:7px;line-height:8px;padding-bottom:2px}
abbr{text-decoration:none;border-bottom:1px dotted #000}
.body{display:flex;flex-direction:column;gap:6px;padding:7px 0 11px}
:host([tight]) .body{gap:2px}
</style><div class="head"><h3><a href="#schema"></a></h3><small></small></div><div class="body"><slot></slot></div>`, (root, el) => {
  root.querySelector('h3 a').textContent = el.getAttribute('name');
  root.querySelector('small').innerHTML = (el.getAttribute('note') || '').split(', ').filter(Boolean).map(n => `<abbr>${n}</abbr>`).join(', ');
});

define('attr-field', `<style>
:host{display:grid;grid-template-columns:67px 283px 1fr;align-items:start;height:19px}
.i{display:flex;justify-content:flex-end;padding:1px 11px 0 0}
input{box-sizing:border-box;width:100%;height:17px;margin:0;padding:1px 1px 0;border:solid #888;border-width:1px 0 0 1px;background:#fff;font:11px "DejaVu Sans",sans-serif;color:#000;outline:0}
:host([readonly]) input{border-width:0}
.s{position:relative;width:144px}
select{appearance:none;box-sizing:border-box;width:100%;height:19px;margin:0;border:1px solid #8b8b86;border-radius:3px;padding:0 4px;background:linear-gradient(#bbb,#bbb) 123px 2px/1px 13px no-repeat,linear-gradient(#fff,#e7e7e5);font:11px "DejaVu Sans",sans-serif;color:#000}
.s x-icon{position:absolute;right:7px;top:4px;pointer-events:none}
.n{font-size:8px;padding:6px 0 0 2px}.n.star{font-size:10px;text-align:right;padding:0}
abbr{border-bottom:1px dotted #000}
</style><span class="i"></span><span class="v"></span><span class="n"></span>`, (root, el) => {
  const v = el.getAttribute('value'), n = el.getAttribute('note'), label = el.parentElement.getAttribute('name');
  if (el.hasAttribute('info')) root.querySelector('.i').innerHTML = '<x-icon name="info" w="13"></x-icon>';
  root.querySelector('.v').innerHTML = el.hasAttribute('select')
    ? `<div class="s"><select aria-label="${label}"><option>${v}</option></select><x-icon name="updown"></x-icon></div>`
    : `<input aria-label="${label}" value="${v}"${el.hasAttribute('readonly') ? ' readonly' : ''}>`;
  if (n === '*') { root.querySelector('.n').textContent = n; root.querySelector('.n').className = 'n star'; }
  else if (n) root.querySelector('.n').innerHTML = `(<abbr>${n}</abbr>)`;
});

define('attr-link', `<style>
:host{display:block;padding-left:66px;font-size:10px;line-height:13px}
:host([small]){font-size:8px;line-height:12px}
a{color:#0000aa;text-decoration:none}
</style>(<a href="#edit"><slot></slot></a>)`);

define('entry-view', `<style>
:host{display:block;background:#fcfcfe;padding:3px 3px 6px 5px}
header{border:1px solid #000;background:#00008b;color:#fff;text-align:center}
h2{margin:0;font-size:16px;font-weight:normal;height:35px;line-height:35px;border-bottom:1px solid #000}
header p{margin:0;font-size:8px;line-height:10px;padding:4px 0 2px;white-space:pre}
.actions{display:grid;grid-template-columns:431fr 498fr;padding-top:13px}
form{width:399px;max-width:100%;margin:18px auto 0}
</style>
<header><h2>cn=default</h2><p>Server: <b>Local LDAP Server</b>  Distinguished Name: <b>cn=default,ou=policies,dc=mnt,dc=lab</b>
Template: <b>Default</b></p></header>
<div class="actions">
<div><entry-action first icon="refresh" w="14">Refresh</entry-action><entry-action big icon="hat">Switch Template</entry-action><entry-action icon="copy">Copy or move this entry</entry-action><entry-action icon="rename">Rename</entry-action><entry-action icon="star">Create a child entry</entry-action><entry-action hint icon="bulb">Hint: To delete an attribute, empty the text field and click save.</entry-action><entry-action hint icon="bulb">Hint: To view the schema for an attribute, click the attribute name.</entry-action></div>
<div><entry-action first icon="tools">Show internal attributes</entry-action><entry-action big icon="export">Export</entry-action><entry-action icon="trash">Delete this entry</entry-action><entry-action icon="compare">Compare with another entry</entry-action><entry-action icon="add">Add new attribute</entry-action></div>
</div>
<form>
<attr-block name="cn" note="required, rdn" tight><attr-field readonly value="default" note="*"></attr-field><attr-link>add value</attr-link><attr-link small>rename</attr-link></attr-block>
<attr-block name="objectClass" note="required"><attr-field info value="top"></attr-field><attr-field info value="pwdPolicy"></attr-field><attr-field info readonly value="person" note="structural"></attr-field><attr-link>add value</attr-link></attr-block>
<attr-block name="pwdAllowUserChange"><attr-field select value="true"></attr-field></attr-block>
<attr-block name="pwdAttribute" note="required"><attr-field value="userPassword"></attr-field><attr-link>add value</attr-link></attr-block>
<attr-block name="pwdExpireWarning"><attr-field value="14482463"></attr-field></attr-block>
<attr-block name="pwdLockout"><attr-field select value="true"></attr-field></attr-block>
<attr-block name="pwdLockoutDuration"><attr-field value="60"></attr-field></attr-block>
</form>`);

define('desktop-screen', `<style>
:host{display:flex;flex-direction:column;height:100vh;overflow:hidden}
:host>*{flex:none}
.page{flex:1;min-height:0;display:flex;flex-direction:column;padding:8px 8px 0;background:#fff;overflow:hidden}
.cols{display:grid;grid-template-columns:312px 1fr;flex:1;min-height:0;padding-top:2px}
</style>
<gnome-panel></gnome-panel><window-title></window-title><tab-strip></tab-strip><nav-bar></nav-bar><bookmarks-bar></bookmarks-bar>
<main class="page"><pla-header></pla-header><div class="cols"><server-tree></server-tree><entry-view></entry-view></div></main>`);
</script>
</body>
</html>
